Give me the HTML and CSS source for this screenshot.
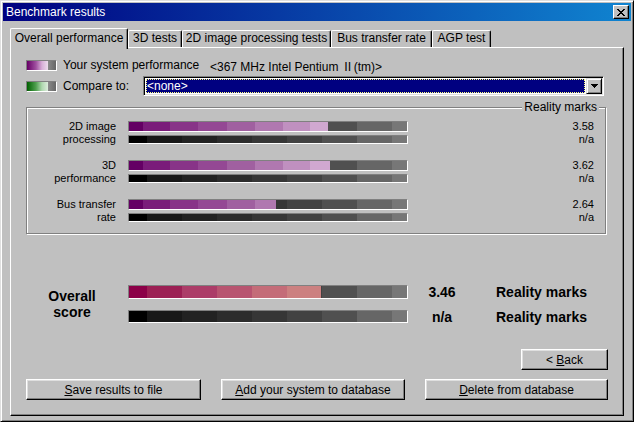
FILE: index.html
```html
<!DOCTYPE html>
<html lang="en">
<head>
    <meta charset="UTF-8">
    <title>Benchmark results</title>
    <link rel="stylesheet" href="styles.css">
</head>
<body>
    <div class="window">
        <div class="titlebar">
            <span class="title">Benchmark results</span>
            <button class="close-btn" aria-label="Close">
                <svg width="8" height="7" viewBox="0 0 8 7" shape-rendering="crispEdges">
                    <path d="M0 0h2v1H0zM6 0h2v1H6zM1 1h2v1H1zM5 1h2v1H5zM2 2h4v1H2zM3 3h2v1H3zM2 4h4v1H2zM1 5h2v1H1zM5 5h2v1H5zM0 6h2v1H0zM6 6h2v1H6z" fill="#000"/>
                </svg>
            </button>
        </div>

        <div class="client">
            <div class="tabs">
                <div class="tab active tab-overall">Overall performance</div>
                <div class="tab tab-3d">3D tests</div>
                <div class="tab tab-2d">2D image processing tests</div>
                <div class="tab tab-bus">Bus transfer rate</div>
                <div class="tab tab-agp">AGP test</div>
            </div>

            <div class="panel">
                <div class="legend-row">
                    <span class="swatch swatch-purple"></span>
                    <span class="legend-label wide">Your system performance</span>
                    <span class="cpu">&lt;367 MHz Intel Pentium Ⅱ(tm)&gt;</span>
                </div>
                <div class="legend-row compare">
                    <span class="swatch swatch-green"></span>
                    <span class="legend-label">Compare to:</span>
                    <div class="combo">
                        <div class="combo-value">&lt;none&gt;</div>
                        <div class="combo-arrow">
                            <svg width="7" height="4" viewBox="0 0 7 4" shape-rendering="crispEdges">
                                <path d="M0 0h7v1H0zM1 1h5v1H1zM2 2h3v1H2zM3 3h1v1H3z" fill="#000"/>
                            </svg>
                        </div>
                    </div>
                </div>

                <div class="group">
                    <span class="group-title">Reality marks</span>

                    <div class="marks-row">
                        <div class="marks-label">2D image<br>processing</div>
                        <div class="bar-stack">
                            <div class="track track-main"><div class="fill fill-purple" style="width: 71.6%"></div></div>
                            <div class="track track-compare"></div>
                        </div>
                        <div class="marks-values"><span>3.58</span><span>n/a</span></div>
                    </div>

                    <div class="marks-row">
                        <div class="marks-label">3D<br>performance</div>
                        <div class="bar-stack">
                            <div class="track track-main"><div class="fill fill-purple" style="width: 72.4%"></div></div>
                            <div class="track track-compare"></div>
                        </div>
                        <div class="marks-values"><span>3.62</span><span>n/a</span></div>
                    </div>

                    <div class="marks-row">
                        <div class="marks-label">Bus transfer<br>rate</div>
                        <div class="bar-stack">
                            <div class="track track-main"><div class="fill fill-purple" style="width: 52.8%"></div></div>
                            <div class="track track-compare"></div>
                        </div>
                        <div class="marks-values"><span>2.64</span><span>n/a</span></div>
                    </div>
                </div>

                <div class="overall">
                    <div class="overall-label">Overall<br>score</div>
                    <div class="track track-big"><div class="fill fill-crimson" style="width: 69.2%"></div></div>
                    <div class="overall-value">3.46</div>
                    <div class="overall-unit">Reality marks</div>
                    <div class="track track-big-compare"></div>
                    <div class="overall-value">n/a</div>
                    <div class="overall-unit">Reality marks</div>
                </div>

                <div class="back-row">
                    <button class="btn btn-back">&lt; <u>B</u>ack</button>
                </div>

                <div class="button-row">
                    <button class="btn btn-save"><u>S</u>ave results to file</button>
                    <button class="btn btn-add"><u>A</u>dd your system to database</button>
                    <button class="btn btn-delete"><u>D</u>elete from database</button>
                </div>
            </div>
        </div>
    </div>
</body>
</html>
```

FILE: styles.css
```css
* {
    box-sizing: border-box;
}

body {
    margin: 0;
    background-color: #c0c0c0;
    font-family: "Liberation Sans", Arial, "Noto Sans CJK JP", sans-serif;
    font-size: 12px;
    color: #000;
}

.window {
    width: 634px;
    height: 422px;
    padding: 2px;
    background-color: #c0c0c0;
    border: 1px solid;
    border-color: #dfdfdf #000 #000 #dfdfdf;
    box-shadow: inset 1px 1px #fff, inset -1px -1px #808080;
}

/* title bar */
.titlebar {
    display: flex;
    align-items: center;
    justify-content: space-between;
    height: 18px;
    padding: 0 2px 0 3px;
    background: linear-gradient(to right, #000080, #1084d0);
    color: #fff;
}

.title {
    line-height: 18px;
}

.close-btn {
    display: flex;
    align-items: center;
    justify-content: center;
    width: 16px;
    height: 14px;
    padding: 0;
    background-color: #c0c0c0;
    border: 1px solid;
    border-color: #fff #000 #000 #fff;
    box-shadow: inset -1px -1px #808080;
}

/* tabs */
.client {
    padding: 7px 7px 0 7px;
}

.tabs {
    display: flex;
    align-items: flex-end;
    height: 19px;
}

.tab {
    position: relative;
    height: 17px;
    line-height: 15px;
    text-align: center;
    white-space: nowrap;
    background-color: #c0c0c0;
    border: 1px solid;
    border-color: #fff #000 transparent #fff;
    border-bottom: none;
    border-radius: 2px 2px 0 0;
    box-shadow: inset -1px 0 #808080;
}

.tab.active {
    z-index: 1;
    height: 21px;
    line-height: 19px;
    margin-bottom: -2px;
}

.tab-overall { width: 118px; }
.tab-3d { width: 54px; }
.tab-2d { width: 149px; }
.tab-bus { width: 101px; }
.tab-agp { width: 59px; }

.panel {
    width: 614px;
    height: 369px;
    padding: 9px 15px 0 15px;
    border: 1px solid;
    border-color: #fff #000 #000 #fff;
    box-shadow: inset -1px -1px #808080;
}

/* legend */
.legend-row {
    display: flex;
    align-items: center;
    height: 16px;
}

.legend-row.compare {
    height: 20px;
    margin-top: 3px;
}

.swatch {
    width: 31px;
    height: 11px;
    margin-right: 6px;
    border: 1px solid;
    border-color: #808080 #fff #fff #808080;
}

.swatch-purple {
    background: linear-gradient(to right, #660066 0, #a050a0 9px, #d8b0d8 15px, #ecdcec 21px, #8a8a8a 21px, #666 29px);
}

.swatch-green {
    background: linear-gradient(to right, #006000 0, #50a050 9px, #b0d8b0 15px, #dcecdc 21px, #8a8a8a 21px, #666 29px);
}

.legend-label {
    width: 80px;
    white-space: nowrap;
}

.legend-label.wide {
    width: 147px;
}

.combo {
    display: flex;
    width: 461px;
    height: 20px;
    padding: 1px;
    background-color: #fff;
    border: 1px solid;
    border-color: #808080 #fff #fff #808080;
    box-shadow: inset 1px 1px #000, inset -1px -1px #dfdfdf;
}

.combo-value {
    flex: 1;
    margin: 1px;
    padding-left: 1px;
    line-height: 14px;
    color: #fff;
    background-color: #000080;
    outline: 1px dotted #ffff80;
    outline-offset: -1px;
}

.combo-arrow {
    display: flex;
    align-items: center;
    justify-content: center;
    width: 16px;
    background-color: #c0c0c0;
    border: 1px solid;
    border-color: #dfdfdf #000 #000 #dfdfdf;
    box-shadow: inset 1px 1px #fff, inset -1px -1px #808080;
}

/* reality marks group */
.group {
    position: relative;
    width: 580px;
    height: 127px;
    margin-top: 11px;
    padding: 12px 11px 0 0;
    border: 1px solid #808080;
    box-shadow: inset 1px 1px #fff, 1px 1px #fff;
}

.group-title {
    position: absolute;
    top: -8px;
    right: 6px;
    padding: 0 2px;
    line-height: 14px;
    background-color: #c0c0c0;
}

.marks-row {
    display: grid;
    grid-template-columns: 89px 280px 1fr;
    column-gap: 12px;
    height: 26px;
    margin-bottom: 13px;
    font-size: 11px;
    line-height: 13px;
}

.marks-label {
    text-align: right;
}

.bar-stack {
    display: flex;
    flex-direction: column;
    padding-top: 1px;
    gap: 3px;
}

.marks-values {
    display: flex;
    flex-direction: column;
    align-items: flex-end;
}

.track {
    border: 1px solid;
    border-color: #808080 #fff #fff #808080;
    background: linear-gradient(to right, #000 0 18px, #181818 18px 53px, #222 53px 88px, #2c2c2c 88px 123px, #363636 123px 158px, #424242 158px 193px, #505050 193px 228px, #666 228px 263px, #777 263px);
}

.track-main { height: 11px; }
.track-compare { height: 9px; }
.track-big { height: 14px; }
.track-big-compare { height: 13px; }

.fill {
    height: 100%;
}

.fill-purple {
    background: linear-gradient(to right, #640064 0 14px, #7a1c7a 14px 41px, #883488 41px 69px, #944894 69px 98px, #a060a0 98px 126px, #b078b0 126px 154px, #c090c0 154px 181px, #d0a8d0 181px 209px, #dcbcdc 209px);
}

.fill-crimson {
    background: linear-gradient(to right, #8c0048 0 18px, #9c2054 18px 53px, #ac3c68 53px 88px, #b85470 88px 123px, #c46c78 123px 158px, #cc8080 158px 193px, #dc9c88 193px);
}

/* overall score */
.overall {
    display: grid;
    grid-template-columns: 102px 280px 88px auto;
    grid-template-rows: 14px 13px;
    row-gap: 11px;
    align-items: center;
    margin-top: 51px;
    font-size: 14px;
    font-weight: bold;
}

.overall-label {
    grid-row: 1 / 3;
    padding-right: 10px;
    line-height: 16px;
    text-align: center;
}

.overall-value {
    padding-right: 20px;
    text-align: center;
}

/* buttons */
.btn {
    height: 21px;
    padding: 0;
    font: inherit;
    color: #000;
    background-color: #c0c0c0;
    border: 1px solid;
    border-color: #fff #000 #000 #fff;
    box-shadow: inset -1px -1px #808080, inset 1px 1px #dfdfdf;
}

.back-row {
    display: flex;
    justify-content: flex-end;
    margin-top: 26px;
}

.btn-back { width: 87px; }

.button-row {
    display: flex;
    justify-content: space-between;
    margin-top: 9px;
}

.btn-save { width: 175px; }
.btn-add { width: 184px; }
.btn-delete { width: 183px; }
```
